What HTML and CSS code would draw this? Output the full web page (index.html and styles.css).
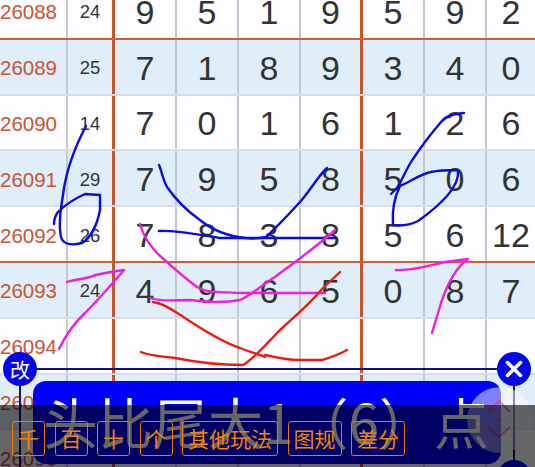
FILE: index.html
```html
<!DOCTYPE html>
<html lang="zh">
<head>
<meta charset="utf-8">
<title>走势图</title>
<link rel="stylesheet" href="styles.css">
</head>
<body>
<main class="stage">
  <div class="board">
    <div class="row rule-orange"><span class="issue">26088</span><span class="sum">24</span><span>9</span><span>5</span><span>1</span><span class="gap">9</span><span>5</span><span>9</span><span>2</span></div>
    <div class="row tint"><span class="issue">26089</span><span class="sum">25</span><span>7</span><span>1</span><span>8</span><span class="gap">9</span><span>3</span><span>4</span><span>0</span></div>
    <div class="row"><span class="issue">26090</span><span class="sum">14</span><span>7</span><span>0</span><span>1</span><span class="gap">6</span><span>1</span><span>2</span><span>6</span></div>
    <div class="row tint"><span class="issue">26091</span><span class="sum">29</span><span>7</span><span>9</span><span>5</span><span class="gap">8</span><span>5</span><span>0</span><span>6</span></div>
    <div class="row rule-orange"><span class="issue">26092</span><span class="sum">26</span><span>7</span><span>8</span><span>3</span><span class="gap">8</span><span>5</span><span>6</span><span>12</span></div>
    <div class="row tint"><span class="issue">26093</span><span class="sum">24</span><span>4</span><span>9</span><span>6</span><span class="gap">5</span><span>0</span><span>8</span><span>7</span></div>
    <div class="row"><span class="issue">26094</span><span class="sum"></span><span></span><span></span><span></span><span class="gap"></span><span></span><span></span><span></span></div>
    <div class="row tint"><span class="issue">26095</span><span class="sum"></span><span></span><span></span><span></span><span class="gap"></span><span></span><span></span><span></span></div>
    <div class="row"><span class="issue">26096</span><span class="sum"></span><span></span><span></span><span></span><span class="gap"></span><span></span><span></span><span></span></div>
  </div>

  <svg class="ink" viewBox="0 0 535 467" aria-hidden="true">
    <g class="ink-blue">
      <path d="M86 126C76 145 66 170 63 195C60 212 59 228 61 237C63 244 70 246 82 243C90 238 97 226 100 210L100 195L85 194C74 199 65 205 58 212C55 216 54 220 54 224"/>
      <path d="M159 165C162 172 163 180 167 187C176 200 190 213 200 220C212 230 228 236 245 238C255 239 262 238 266 237C280 224 290 213 300 202C310 191 318 176 327 168"/>
      <path d="M159 231C175 230 195 234 220 238L335 238"/>
      <path d="M464 113C455 114 447 115 441 122C430 135 420 148 411 162C405 172 401 182 397 188L391 194"/>
      <path d="M400 186C410 182 420 174 431 172C440 170 450 170 458 170C459 178 454 188 447 196C438 206 428 214 418 221C410 225 400 226 393 225C392 212 394 198 400 186"/>
    </g>
    <g class="ink-magenta">
      <path d="M59 349C66 335 74 323 85 313C98 300 112 284 124 270C110 272 100 273 90 277C82 279 74 280 67 282"/>
      <path d="M140 224C143 235 148 244 158 254C170 265 185 278 197 287C205 292 212 292 240 293L325 293"/>
      <path d="M150 298C160 302 175 300 190 300C205 302 225 303 240 300C250 296 262 285 275 277C295 262 315 248 335 230"/>
      <path d="M396 270C415 271 430 265 445 262L468 259C455 268 447 285 441 303L432 333"/>
    </g>
    <g class="ink-red">
      <path d="M153 302C165 304 172 310 185 318C200 328 225 343 240 348C250 352 258 354 265 357"/>
      <path d="M141 352C150 356 158 356 175 358C195 362 220 365 243 365C255 358 268 342 280 330C295 316 310 304 322 289L340 272"/>
      <path d="M265 355C278 358 290 360 300 360L322 360C332 357 340 354 347 350"/>
    </g>
  </svg>

  <div class="axis-h"></div>
  <div class="axis-v axis-left"></div>
  <div class="axis-v axis-right"></div>
  <div class="knob knob-edit">改</div>
  <div class="knob knob-close">
    <svg viewBox="0 0 34 34" aria-hidden="true"><path d="M10.500 10.500L23.500 23.500M23.500 10.500L10.500 23.500"/></svg>
  </div>
  <div class="knob knob-next"></div>

  <div class="banner">头比尾大1（6）点</div>

  <div class="scroller">
    <svg viewBox="0 0 66 66" aria-hidden="true">
      <path d="M21 25L32 14L43 25M21 40L32 50L43 40"/>
      <circle cx="32" cy="32" r="2"/>
    </svg>
  </div>

  <nav class="toolbar">
    <button class="tool">千</button>
    <button class="tool">百</button>
    <button class="tool">十</button>
    <button class="tool">个</button>
    <button class="tool">其他玩法</button>
    <button class="tool">图规</button>
    <button class="tool">差分</button>
  </nav>
</main>
</body>
</html>
```
FILE: styles.css
```css
* { box-sizing: border-box; }
html, body { margin: 0; padding: 0; background: #fff; }
body { width: 535px; height: 467px; overflow: hidden; }

.stage {
  position: relative;
  width: 535px;
  height: 467px;
  overflow: hidden;
  font-family: "Liberation Sans", Arial, "Noto Sans CJK SC", sans-serif;
}

.board { margin-top: -16px; }

.row {
  display: grid;
  grid-template-columns: 68px 47px 62px 62px 62px 62px 62px 62px 48px;
  height: 55.800px;
  border-bottom: 2px solid #dadde7;
  background: #fefdff;
}
.row.tint { background: #dfeef8; }
.row.rule-orange { border-bottom-color: #c9623a; }

.row span {
  display: flex;
  align-items: center;
  justify-content: center;
  border-right: 2px solid #c6c8d0;
  font-size: 34px;
  color: #333;
  padding-top: 3px;
}
.row span:last-child { border-right: 0; }
.row .issue {
  justify-content: flex-start;
  font-size: 20.500px;
  color: #cc5230;
  padding-left: 0;
}
.row .sum {
  font-size: 18.500px;
  border-right: 3px solid #c5562a;
}
.row .gap { border-right: 3px solid #c5562a; }

.ink {
  position: absolute;
  left: 0;
  top: 0;
  width: 535px;
  height: 467px;
  fill: none;
  stroke-width: 2.400;
  stroke-linecap: round;
  stroke-linejoin: round;
}
.ink-blue { stroke: #0a0ae6; }
.ink-magenta { stroke: #f01ee0; }
.ink-red { stroke: #ee1c10; }

.axis-h {
  position: absolute;
  left: 37px;
  top: 368px;
  width: 461px;
  height: 2px;
  background: #12127e;
}
.axis-v {
  position: absolute;
  top: 385px;
  width: 2px;
  height: 82px;
  background: #12127e;
}
.axis-left { left: 19px; }
.axis-right { left: 513px; }

.knob {
  position: absolute;
  width: 34px;
  height: 34px;
  border-radius: 50%;
  background: #0505f0;
  color: #fff;
  display: flex;
  align-items: center;
  justify-content: center;
  font-family: "Noto Sans CJK SC", sans-serif;
  font-size: 20px;
}
.knob-edit { left: 3px; top: 352px; }
.knob-close { left: 497px; top: 352px; }
.knob-next { left: 497px; top: 460px; }
.knob svg { width: 34px; height: 34px; }
.knob svg path {
  fill: none;
  stroke: #fff;
  stroke-width: 3.500;
  stroke-linecap: round;
}

.banner {
  position: absolute;
  left: 33px;
  top: 381px;
  width: 468px;
  height: 83px;
  padding-left: 10px;
  border-radius: 13px;
  background: #0000fb;
  color: #fff;
  font-family: "Noto Sans CJK SC", sans-serif;
  font-size: 55px;
  line-height: 78px;
  white-space: nowrap;
  overflow: hidden;
}

.scroller {
  position: absolute;
  left: 467px;
  top: 387px;
  width: 66px;
  height: 66px;
  border-radius: 50%;
  background: rgba(255, 255, 255, 0.5);
}
.scroller svg { display: block; width: 66px; height: 66px; }
.scroller path {
  fill: none;
  stroke: rgba(225, 50, 70, 0.55);
  stroke-width: 2;
}
.scroller circle { fill: rgba(225, 50, 70, 0.55); }

.toolbar {
  position: absolute;
  left: 0;
  right: 0;
  bottom: 0;
  height: 62px;
  padding: 16px 0 0 12px;
  display: flex;
  align-items: flex-start;
  gap: 9.500px;
  background: rgba(0, 0, 0, 0.6);
}
.tool {
  height: 35px;
  padding: 0 5px;
  border: 1px solid #f07800;
  border-radius: 3px;
  background: transparent;
  color: #f58200;
  font-family: "Noto Sans CJK SC", sans-serif;
  font-size: 21px;
  line-height: 31px;
  white-space: nowrap;
}
```
